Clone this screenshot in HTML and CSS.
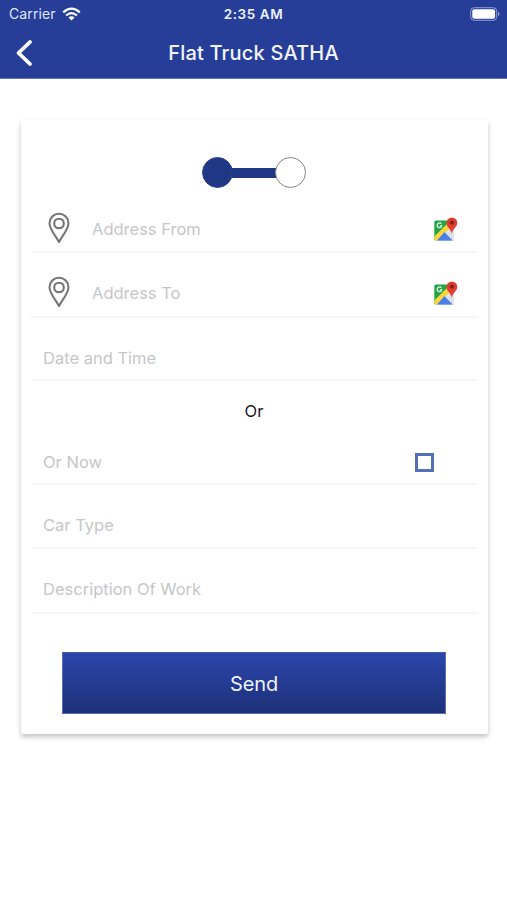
FILE: index.html
```
<!DOCTYPE html>
<html lang="en">
<head>
<meta charset="utf-8">
<title>Flat Truck SATHA</title>
<link rel="stylesheet" href="styles.css">
</head>
<body>
<svg width="0" height="0" class="defs">
  <symbol id="pin" viewBox="0 0 22 32">
    <path d="M11 30C9 25.500 1.500 17.500 1.500 11.200a9.500 9.500 0 0 1 19 0C20.500 17.500 13 25.500 11 30Z" fill="none" stroke="#747474" stroke-width="2" stroke-linejoin="round"/>
    <circle cx="11" cy="11.500" r="4.800" fill="none" stroke="#747474" stroke-width="2.100"/>
  </symbol>
  <symbol id="map" viewBox="0 0 24 24">
    <path d="M2 3.500h17v20H2Q.300 23.500.300 22V5Q.300 3.500 2 3.500Z" fill="#23a445"/>
    <path d="M.300 22 15 8l5 5v9q0 1.500-1.500 1.500H2Q.300 23.500.300 22Z" fill="#dfe1e5"/>
    <path d="M.300 19.500 14 6l3 4L3 23.500H2Q.300 23.500.300 22Z" fill="#fbd63b"/>
    <path d="M3 23.500 10.500 15l8 8.500Z" fill="#4a80ee"/>
    <path d="M7.300 6.700A2.400 2.400 0 1 0 7.900 8.700H5.700" fill="none" stroke="#fff" stroke-width="1.100"/>
    <path d="M17.700 17C17.300 12.500 12.500 10 12.500 5.800a5.400 5.400 0 0 1 10.800 0C23.300 10 18.100 12.500 17.700 17Z" fill="#e23c33"/>
    <circle cx="17.900" cy="5.600" r="2.200" fill="#851f1b"/>
  </symbol>
</svg>
<header class="header">
  <div class="status">
    <div class="carrier"><span>Carrier</span>
      <svg width="19" height="14" viewBox="0 0 19 14" fill="none" stroke="#fff" stroke-width="2.300"><path d="M1.200 5.400Q9.500-2.200 17.800 5.400M4.100 8.500Q9.500 3.700 14.900 8.500"/><path d="M9.500 13.600 6.500 10.600Q9.500 8.100 12.500 10.600Z" fill="#fff" stroke="none"/></svg>
    </div>
    <div class="time">2:35 AM</div>
    <svg class="battery" width="31" height="14" viewBox="0 0 31 14"><rect x=".700" y=".700" width="26" height="12.600" rx="3.400" fill="none" stroke="#8f9dd0" stroke-width="1"/><rect x="2.300" y="2.300" width="22.800" height="9.400" rx="2" fill="#fff"/><path d="M28 4.500q3 2.500 0 5Z" fill="#8f9dd0"/></svg>
  </div>
  <div class="nav">
    <svg width="18" height="28" viewBox="0 0 18 28" fill="none" stroke="#fff" stroke-width="3.800" stroke-linecap="round" stroke-linejoin="round"><path d="M15 3 3.500 14 15 25"/></svg>
    <h1>Flat Truck SATHA</h1>
    <span></span>
  </div>
</header>
<main class="card">
  <div class="stepper"><i class="dot on"></i><i class="bar"></i><i class="dot"></i></div>
  <div class="row from"><svg class="pin"><use href="#pin"/></svg><span class="address-from">Address From</span><svg class="map"><use href="#map"/></svg></div>
  <div class="row to"><svg class="pin"><use href="#pin"/></svg><span class="address-to">Address To</span><svg class="map"><use href="#map"/></svg></div>
  <div class="row date"><span>Date and Time</span></div>
  <div class="or"><span>Or</span></div>
  <div class="row now"><span>Or Now</span><i class="check"></i></div>
  <div class="row car"><span>Car Type</span></div>
  <div class="row work"><span>Description Of Work</span></div>
  <button class="send">Send</button>
</main>
</body>
</html>
```
FILE: styles.css
```
* { box-sizing: border-box; }
body { margin: 0; min-height: 100vh; background: #fff; font-family: Inter, "Liberation Sans", sans-serif; }
.defs { display: block; }
.header { height: 79px; background: #273e99; color: #fff; border-bottom: 1px solid #6575b5; }
.status { height: 27px; display: grid; grid-template-columns: 1fr auto 1fr; align-items: center; padding: 0 6px 0 9px; }
.carrier { display: flex; align-items: center; gap: 6px; font-size: 14px; letter-spacing: .1px; color: #dfe5f8; }
.time { margin-right: 3px; font-size: 13.500px; font-weight: 600; letter-spacing: .6px; color: #eef2ff; }
.battery { justify-self: end; }
.nav { height: 51px; display: grid; grid-template-columns: 40px auto 40px; justify-content: space-between; align-items: center; padding: 0 15px; }
.nav h1 { margin: 0; font-size: 20px; font-weight: 550; line-height: 24px; letter-spacing: .2px; color: #f2f5ff; }
.card { width: 467px; height: 614px; margin: 41px 0 0 21px; padding: 0 10px 0 11px; background: #fff; border-radius: 2px; box-shadow: 0 3px 5px rgba(0,0,0,.24); display: flex; flex-direction: column; }
.stepper { height: 86px; padding: 19px 3px 0 0; display: flex; justify-content: center; align-items: center; }
.dot { width: 31px; height: 31px; border-radius: 50%; border: 1.500px solid #858585; background: #fff; }
.dot.on { background: #203785; border-color: #30468f; }
.bar { width: 44px; height: 10px; margin: 0 -1px; background: #203785; }
.row { display: flex; align-items: center; border-bottom: 2px solid #f6f6f6; padding-left: 11px; color: #c6c6c8; font-size: 16.500px; line-height: 20px; }
.from { height: 47px; padding-left: 17px; }
.to { height: 65px; margin-left: -2px; padding-left: 19px; padding-top: 17px; }
.pin { width: 22px; height: 32px; margin: -2px 21px 0 -1px; }
.row .pin + span { margin-left: 1px; }
.map { width: 24px; height: 24px; margin: 0 20px 0 auto; }
.date { height: 63px; padding-top: 19px; }
.or { height: 60px; display: flex; align-items: center; justify-content: center; font-size: 16.500px; color: #191919; padding-right: 2px; }
.now { height: 44px; }
.check { width: 19px; height: 19px; border: 3px solid #5370b4; margin: 0 44px 0 auto; }
.car { height: 64px; padding-top: 18px; }
.work { height: 65px; padding-top: 17px; }
.send { width: 384px; height: 62px; margin: 38px 0 0 30px; padding: 2px 0 0; border: 1px solid #5a6db8; border-top-color: #4056b0; background: linear-gradient(#2b46ab, #1e3078); color: #eef2ff; font: 20px/24px Inter, "Liberation Sans", sans-serif; letter-spacing: -.1px; }
```
